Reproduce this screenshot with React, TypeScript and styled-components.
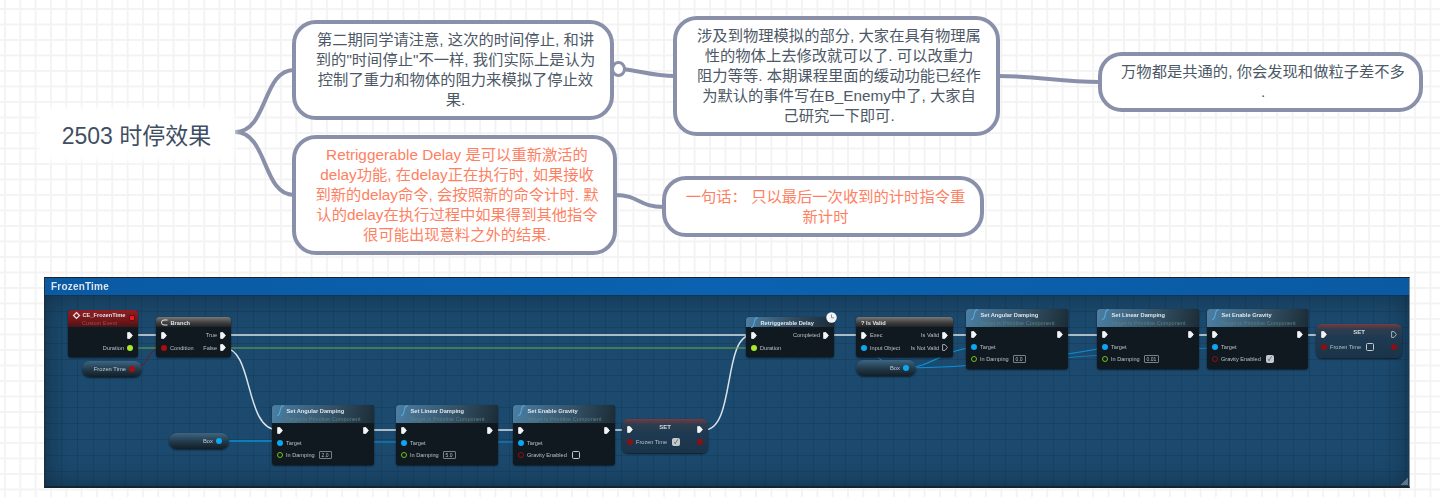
import React from "react";
import styled, { createGlobalStyle, css } from "styled-components";

const GlobalStyle = createGlobalStyle`
  html, body {
    margin: 0;
    padding: 0;
    background: #fff;
  }
  body {
    font-family: "Liberation Sans", "Noto Sans CJK SC", sans-serif;
  }
`;

const Page = styled.div`
  width: 1440px;
  height: 497px;
  overflow: hidden;
  background-color: #fff;
  background-image: linear-gradient(#f3f3f4 2px, transparent 2px),
    linear-gradient(90deg, #f3f3f4 2px, transparent 2px);
  background-size: 15.33px 15.5px;
  background-position: 4px 8px;
`;

const MindMap = styled.div`
  position: relative;
  height: 277px;
`;

const Connectors = styled.svg`
  position: absolute;
  inset: 0;
  width: 1440px;
  height: 277px;
`;

const RootTopic = styled.div`
  position: absolute;
  left: 41px;
  top: 110px;
  width: 191px;
  height: 48px;
  display: flex;
  align-items: center;
  justify-content: center;
  background: rgba(255, 255, 255, 0.92);
  box-shadow: 0 0 6px 3px rgba(255, 255, 255, 0.9);
  border-radius: 8px;
  font-size: 23px;
  color: #3f4f63;
`;

const Topic = styled.div<{ $x: number; $y: number; $w: number; $h: number; $red?: boolean }>`
  position: absolute;
  left: ${(p) => p.$x}px;
  top: ${(p) => p.$y}px;
  width: ${(p) => p.$w}px;
  height: ${(p) => p.$h}px;
  box-sizing: border-box;
  padding-left: 5px;
  display: flex;
  flex-direction: column;
  align-items: center;
  justify-content: center;
  background: #fff;
  border: 4px solid #8a90aa;
  border-radius: 24px;
  font-size: 15.3px;
  line-height: 20px;
  white-space: nowrap;
  color: ${(p) => (p.$red ? "#ff7f62" : "#4d5866")};
`;

const Collapse = styled.div`
  position: absolute;
  left: 611px;
  top: 61px;
  width: 9px;
  height: 10px;
  border: 3.5px solid #8a90aa;
  border-radius: 50%;
  background: #fff;
`;

const GraphPanel = styled.section`
  width: 1366px;
  height: 211px;
  margin-left: 44px;
  box-sizing: border-box;
  border-right: 1px solid #8d9296;
  border-bottom: 2px solid #16242f;
  border-left: 1px solid #22303a;
  border-top: 1px solid #16242f;
  display: flex;
  flex-direction: column;
  filter: blur(0.5px);
`;

const TitleBar = styled.header`
  height: 17px;
  flex: none;
  display: flex;
  align-items: center;
  padding-left: 6px;
  background: linear-gradient(90deg, #0a5aa3, #0b62b0 50%, #0a5aa3);
  color: #d9e4ee;
  font-size: 10px;
  font-weight: 700;
  letter-spacing: 0.2px;
`;

const GraphBody = styled.div`
  position: relative;
  flex: 1;
  overflow: hidden;
  background-color: #1c4a6e;
  background-image: linear-gradient(rgba(10, 30, 50, 0.18) 1px, transparent 1px),
    linear-gradient(90deg, rgba(10, 30, 50, 0.18) 1px, transparent 1px);
  background-size: 16px 16px;
  &::after {
    content: "";
    position: absolute;
    inset: 0;
    pointer-events: none;
    box-shadow: inset 0 0 28px rgba(8, 25, 40, 0.55);
  }
`;

const ResizeGrip = styled.span`
  position: absolute;
  z-index: 2;
  right: 1px;
  bottom: 1px;
  width: 7px;
  height: 7px;
  background: linear-gradient(135deg, transparent 50%, #5d7486 50%);
`;

const Wires = styled.svg`
  position: absolute;
  inset: 0;
  width: 100%;
  height: 100%;
`;

const headerStyles = {
  event: css`
    height: 17px;
    background: linear-gradient(180deg, #8e1f24, #6e1518 70%, #43161a);
  `,
  flow: css`
    height: 10px;
    background: linear-gradient(180deg, #787878, #3c3c3c 60%, #1f2326);
  `,
  pure: css`
    height: 18px;
    background: linear-gradient(100deg, #4b7fa3, #35546a 55%, #1c2c36);
  `,
  call: css`
    height: 10px;
    background: linear-gradient(100deg, #4b7fa3, #2f4a5d 55%, #1c2c36);
  `,
};

type HeaderKind = keyof typeof headerStyles;

const BlueprintNode = styled.div<{ $x: number; $y: number; $w: number }>`
  position: absolute;
  z-index: 1;
  box-sizing: border-box;
  left: ${(p) => p.$x}px;
  top: ${(p) => p.$y}px;
  width: ${(p) => p.$w}px;
  border-radius: 3px;
  overflow: hidden;
  background: #10191f;
  box-shadow: 0 1px 2px rgba(0, 0, 0, 0.65);
`;

const NodeHeader = styled.div<{ $kind: HeaderKind }>`
  ${(p) => headerStyles[p.$kind]}
  box-sizing: border-box;
  padding: 1px 0 0 5px;
  display: flex;
  flex-direction: column;
  justify-content: center;
`;

const NodeTitle = styled.div`
  display: flex;
  align-items: center;
  gap: 2.5px;
  font-size: 5.7px;
  line-height: 8px;
  font-weight: 700;
  color: #dfe5e9;
  white-space: nowrap;
`;

const NodeSubtitle = styled.div<{ $red?: boolean }>`
  padding-left: 9px;
  font-size: 5.6px;
  line-height: 8px;
  white-space: nowrap;
  color: ${(p) => (p.$red ? "#a84a4a" : "#5e7f79")};
`;

const TitleIcon = styled.svg`
  width: 7px;
  height: 7px;
  flex: none;
  overflow: visible;
`;

const NodeRows = styled.div<{ $tight?: boolean }>`
  padding: ${(p) => (p.$tight ? "1px" : "2px")} 5px 3px;
`;

const PinRow = styled.div`
  height: 12.5px;
  display: flex;
  align-items: center;
  justify-content: space-between;
`;

const PinSide = styled.div`
  display: flex;
  align-items: center;
  gap: 3px;
  font-size: 5.6px;
  color: #b7c0c6;
  white-space: nowrap;
`;

const ExecPin = styled.svg`
  width: 6px;
  height: 7px;
  flex: none;
`;

const DataPin = styled.span<{ $color: string; $hollow?: boolean }>`
  flex: none;
  box-sizing: border-box;
  width: 6px;
  height: 6px;
  border-radius: 50%;
  background: ${(p) => (p.$hollow ? "transparent" : p.$color)};
  border: ${(p) => (p.$hollow ? `1.3px solid ${p.$color}` : "none")};
`;

const ValueBox = styled.span`
  margin-left: 1px;
  padding: 0 2px;
  border: 1px solid #74818a;
  border-radius: 1px;
  font-size: 5px;
  line-height: 6px;
  color: #b7c0c6;
`;

const CheckBox = styled.span<{ $on?: boolean }>`
  margin-left: 2px;
  width: 6px;
  height: 6px;
  border: 1px solid #c4c9cc;
  border-radius: 1.5px;
  background: ${(p) => (p.$on ? "#c4c9cc" : "transparent")};
  color: #26333b;
  font-size: 6px;
  line-height: 6px;
  text-align: center;
`;

const SetNodeBox = styled(BlueprintNode)`
  background: linear-gradient(180deg, #7a3a40 0, #2f3d4d 5px, #1e3a52 40%, #1a3348);
  border-radius: 6px;
  padding: 4px 5px 5px;
`;

const SetLabel = styled.span`
  font-size: 6px;
  line-height: 7px;
  font-weight: 700;
  color: #d4dade;
  margin-bottom: 4px;
`;

const VariableNode = styled.div<{ $x: number; $y: number; $w: number }>`
  position: absolute;
  z-index: 1;
  left: ${(p) => p.$x}px;
  top: ${(p) => p.$y}px;
  width: ${(p) => p.$w}px;
  height: 16px;
  box-sizing: border-box;
  padding-right: 7px;
  display: flex;
  align-items: center;
  justify-content: flex-end;
  gap: 3px;
  border-radius: 8px;
  background: linear-gradient(180deg, #3e6580, #21394a 55%, #131e26);
  box-shadow: 0 1px 2px rgba(0, 0, 0, 0.6);
  font-size: 5.8px;
  color: #c3cbd0;
`;

const RedDot = styled.span`
  position: absolute;
  top: 5px;
  right: 3px;
  width: 4px;
  height: 4px;
  background: #e11b22;
  border: 1px solid #5a1014;
  border-radius: 1px;
`;

const ClockBadge = styled.svg`
  position: absolute;
  z-index: 2;
  left: 781px;
  top: 17px;
  width: 11px;
  height: 11px;
`;

// page coordinates minus the origin of the graph body
const OX = 45;
const OY = 295;

const Exec = ({ hollow }: { hollow?: boolean }) => (
  <ExecPin viewBox="0 0 6 7">
    <path
      d="M.6.6H3L5.4 3.5 3 6.4H.6Z"
      fill={hollow ? "none" : "#f4f5f6"}
      stroke={hollow ? "#c8cdd0" : "#f4f5f6"}
      strokeWidth="0.8"
    />
  </ExecPin>
);

// the swoopy function mark in front of a node title
const FuncIcon = () => (
  <TitleIcon viewBox="0 0 7 7">
    <path d="M0 8.5C2.5 8.5 2.6 6.5 3.2 3.5S4.2-1.2 6.8-1.2" fill="none" stroke="#55a9dd" strokeWidth="1.1" />
  </TitleIcon>
);

const BLUE = "#0ea5f2";
const GREEN = "#6fc21f";
const DARK_RED = "#8d0f12";

const ExecRow = () => (
  <PinRow>
    <PinSide>
      <Exec />
    </PinSide>
    <PinSide>
      <Exec />
    </PinSide>
  </PinRow>
);

const TargetRow = () => (
  <PinRow>
    <PinSide>
      <DataPin $color={BLUE} />
      Target
    </PinSide>
  </PinRow>
);

const FunctionNode = ({
  x,
  y,
  title,
  value,
  checked,
  w = 102,
}: {
  x: number;
  y: number;
  title: string;
  value?: string;
  checked?: boolean;
  w?: number;
}) => (
  <BlueprintNode $x={x - OX} $y={y - OY} $w={w}>
    <NodeHeader $kind="pure">
      <NodeTitle>
        <FuncIcon />
        {title}
      </NodeTitle>
      <NodeSubtitle>Target is Primitive Component</NodeSubtitle>
    </NodeHeader>
    <NodeRows $tight>
      <ExecRow />
      <TargetRow />
      <PinRow>
        {value ? (
          <PinSide>
            <DataPin $color={GREEN} $hollow />
            In Damping
            <ValueBox>{value}</ValueBox>
          </PinSide>
        ) : (
          <PinSide>
            <DataPin $color={DARK_RED} $hollow />
            Gravity Enabled
            <CheckBox $on={checked}>{checked ? "✓" : ""}</CheckBox>
          </PinSide>
        )}
      </PinRow>
    </NodeRows>
  </BlueprintNode>
);

const SetNode = ({ x, y, checked, open }: { x: number; y: number; checked?: boolean; open?: boolean }) => (
  <SetNodeBox $x={x - OX} $y={y - OY} $w={86}>
    <PinRow>
      <Exec />
      <SetLabel>SET</SetLabel>
      <Exec hollow={open} />
    </PinRow>
    <PinRow>
      <PinSide>
        <DataPin $color={DARK_RED} />
        Frozen Time
        <CheckBox $on={checked}>{checked ? "✓" : ""}</CheckBox>
      </PinSide>
      <DataPin $color={DARK_RED} />
    </PinRow>
  </SetNodeBox>
);

const topics = [
  {
    x: 292,
    y: 20,
    w: 322,
    h: 100,
    lines: ["第二期同学请注意, 这次的时间停止, 和讲", '到的"时间停止"不一样, 我们实际上是认为', "控制了重力和物体的阻力来模拟了停止效", "果."],
  },
  {
    x: 292,
    y: 135,
    w: 325,
    h: 120,
    red: true,
    lines: [
      "Retriggerable Delay 是可以重新激活的",
      "delay功能, 在delay正在执行时, 如果接收",
      "到新的delay命令, 会按照新的命令计时. 默",
      "认的delay在执行过程中如果得到其他指令",
      "很可能出现意料之外的结果.",
    ],
  },
  {
    x: 673,
    y: 16,
    w: 327,
    h: 120,
    lines: [
      "涉及到物理模拟的部分, 大家在具有物理属",
      "性的物体上去修改就可以了. 可以改重力",
      "阻力等等. 本期课程里面的缓动功能已经作",
      "为默认的事件写在B_Enemy中了, 大家自",
      "己研究一下即可.",
    ],
  },
  { x: 1098, y: 52, w: 325, h: 60, lines: ["万物都是共通的, 你会发现和做粒子差不多", "."] },
  { x: 662, y: 176, w: 322, h: 61, red: true, lines: ["一句话： 只以最后一次收到的计时指令重", "新计时"] },
];

const App: React.FC = () => {
  return (
    <Page>
      <GlobalStyle />
      <MindMap>
        <Connectors viewBox="0 0 1440 277" fill="none" stroke="#8a90aa" strokeWidth="4">
          <path d="M235 132C268 132 262 70 294 70" />
          <path d="M235 132C268 132 262 195 294 195" />
          <path d="M622 69C642 71 652 76 675 76" />
          <path d="M998 76C1040 76 1058 82 1100 82" />
          <path d="M615 195C640 195 638 207 664 207" />
        </Connectors>
        <RootTopic>2503 时停效果</RootTopic>
        {topics.map((t) => (
          <Topic key={t.lines[0]} $x={t.x} $y={t.y} $w={t.w} $h={t.h} $red={t.red}>
            {t.lines.map((line) => (
              <div key={line}>{line}</div>
            ))}
          </Topic>
        ))}
        <Collapse />
      </MindMap>

      <GraphPanel>
        <TitleBar>FrozenTime</TitleBar>
        <GraphBody>
          <Wires viewBox="0 0 1364 191" fill="none">
            <g transform={`translate(${-OX} ${-OY})`}>
              <g stroke="#dbe3e8" strokeWidth="1.5">
                <path d="M128 335H160" />
                <path d="M226 335H750" />
                <path d="M224 348C254 348 244 430 278 430" />
                <path d="M362 430H402" />
                <path d="M486 430H519" />
                <path d="M603 430H628" />
                <path d="M704 430C736 430 722 335 752 335" />
                <path d="M828 335H862" />
                <path d="M946 335H972" />
                <path d="M1060 335H1103" />
                <path d="M1190 335H1213" />
                <path d="M1300 335H1322" />
              </g>
              <path d="M129 348H752" stroke="#62ad45" strokeWidth="1.2" />
              <path d="M134 368C150 368 146 348 162 348" stroke="#6d1a22" strokeWidth="1" />
              <g stroke="#0d8fd6">
                <path d="M222 441H282" strokeWidth="1.6" />
                <path d="M282 442H402" strokeWidth="1.2" />
                <path d="M402 442H519" strokeWidth="1" />
                <path d="M905 368C880 368 875 348 860 348" strokeWidth="1" />
                <path d="M905 368C930 368 945 349 972 348" strokeWidth="1.2" />
                <path d="M905 368C970 368 1050 358 1103 348" strokeWidth="1.2" />
                <path d="M1060 358C1120 354 1160 350 1213 348" strokeWidth="0.7" />
              </g>
            </g>
          </Wires>

          <BlueprintNode $x={68 - OX} $y={310 - OY} $w={70}>
            <NodeHeader $kind="event">
              <NodeTitle>
                <TitleIcon viewBox="0 0 7 7">
                  <path d="M3.5.5L6.5 3.5 3.5 6.5 .5 3.5Z" fill="none" stroke="#f0e6e6" strokeWidth="1.2" />
                </TitleIcon>
                CE_FrozenTime
              </NodeTitle>
              <NodeSubtitle $red>Custom Event</NodeSubtitle>
            </NodeHeader>
            <RedDot />
            <NodeRows>
              <PinRow>
                <span />
                <PinSide>
                  <Exec />
                </PinSide>
              </PinRow>
              <PinRow>
                <span />
                <PinSide>
                  Duration
                  <DataPin $color="#a6ea2a" />
                </PinSide>
              </PinRow>
            </NodeRows>
          </BlueprintNode>

          <BlueprintNode $x={156 - OX} $y={317 - OY} $w={75}>
            <NodeHeader $kind="flow">
              <NodeTitle>
                <TitleIcon viewBox="0 0 7 7">
                  <path d="M6.5 1H3A2.5 2.5 0 0 0 3 6H6.5M.2 3.5H1" fill="none" stroke="#e4e6e8" strokeWidth="1" />
                </TitleIcon>
                Branch
              </NodeTitle>
            </NodeHeader>
            <NodeRows>
              <PinRow>
                <PinSide>
                  <Exec />
                </PinSide>
                <PinSide>
                  True
                  <Exec />
                </PinSide>
              </PinRow>
              <PinRow>
                <PinSide>
                  <DataPin $color="#a80d12" />
                  Condition
                </PinSide>
                <PinSide>
                  False
                  <Exec />
                </PinSide>
              </PinRow>
            </NodeRows>
          </BlueprintNode>

          <VariableNode $x={82 - OX} $y={361 - OY} $w={60}>
            Frozen Time
            <DataPin $color="#a80d12" />
          </VariableNode>
          <VariableNode $x={169 - OX} $y={433 - OY} $w={60}>
            Box
            <DataPin $color={BLUE} />
          </VariableNode>
          <VariableNode $x={856 - OX} $y={360 - OY} $w={60}>
            Box
            <DataPin $color={BLUE} />
          </VariableNode>

          <FunctionNode x={272} y={405} title="Set Angular Damping" value="2.0" />
          <FunctionNode x={396} y={405} title="Set Linear Damping" value="5.0" />
          <FunctionNode x={513} y={405} title="Set Enable Gravity" />
          <SetNode x={622} y={419} checked />

          <BlueprintNode $x={746 - OX} $y={317 - OY} $w={88}>
            <NodeHeader $kind="call">
              <NodeTitle>
                <FuncIcon />
                Retriggerable Delay
              </NodeTitle>
            </NodeHeader>
            <NodeRows>
              <PinRow>
                <PinSide>
                  <Exec />
                </PinSide>
                <PinSide>
                  Completed
                  <Exec />
                </PinSide>
              </PinRow>
              <PinRow>
                <PinSide>
                  <DataPin $color="#a6ea2a" />
                  Duration
                </PinSide>
              </PinRow>
            </NodeRows>
          </BlueprintNode>
          <ClockBadge viewBox="0 0 11 11">
            <circle cx="5.5" cy="5.5" r="5.2" fill="#f2f4f5" />
            <path d="M5.5 2.5V5.8H8.2" fill="none" stroke="#8b949a" strokeWidth="1" />
          </ClockBadge>

          <BlueprintNode $x={856 - OX} $y={317 - OY} $w={97}>
            <NodeHeader $kind="flow">
              <NodeTitle>? Is Valid</NodeTitle>
            </NodeHeader>
            <NodeRows>
              <PinRow>
                <PinSide>
                  <Exec />
                  Exec
                </PinSide>
                <PinSide>
                  Is Valid
                  <Exec />
                </PinSide>
              </PinRow>
              <PinRow>
                <PinSide>
                  <DataPin $color={BLUE} />
                  Input Object
                </PinSide>
                <PinSide>
                  Is Not Valid
                  <Exec hollow />
                </PinSide>
              </PinRow>
            </NodeRows>
          </BlueprintNode>

          <FunctionNode x={966} y={309} title="Set Angular Damping" value="0.0" />
          <FunctionNode x={1097} y={309} title="Set Linear Damping" value="0.01" />
          <FunctionNode x={1207} y={309} title="Set Enable Gravity" w={101} checked />
          <SetNode x={1316} y={324} open />
          <ResizeGrip />
        </GraphBody>
      </GraphPanel>
    </Page>
  );
};

export default App;
